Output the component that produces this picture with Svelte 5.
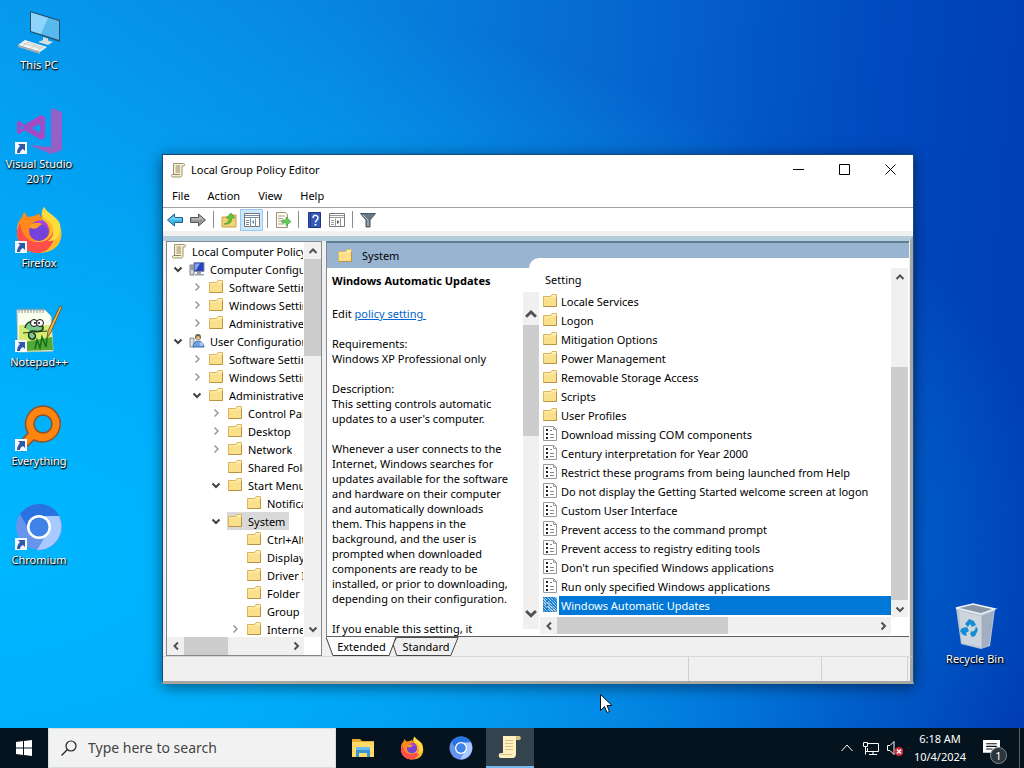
<script>
  const shortcuts = [
    { icon: 'pc', label: 'This PC', link: false },
    { icon: 'vs', label: 'Visual Studio 2017', link: true },
    { icon: 'firefox', label: 'Firefox', link: true },
    { icon: 'npp', label: 'Notepad++', link: true },
    { icon: 'everything', label: 'Everything', link: true },
    { icon: 'chromium', label: 'Chromium', link: true },
  ]

  const tree = [
    { level: 0, icon: 'scroll', label: 'Local Computer Policy' },
    { level: 1, icon: 'computer', label: 'Computer Configuration', open: true },
    { level: 2, icon: 'folder', label: 'Software Settings', open: false },
    { level: 2, icon: 'folder', label: 'Windows Settings', open: false },
    { level: 2, icon: 'folder', label: 'Administrative Templates', open: false },
    { level: 1, icon: 'user', label: 'User Configuration', open: true },
    { level: 2, icon: 'folder', label: 'Software Settings', open: false },
    { level: 2, icon: 'folder', label: 'Windows Settings', open: false },
    { level: 2, icon: 'folder', label: 'Administrative Templates', open: true },
    { level: 3, icon: 'folder', label: 'Control Panel', open: false },
    { level: 3, icon: 'folder', label: 'Desktop', open: false },
    { level: 3, icon: 'folder', label: 'Network', open: false },
    { level: 3, icon: 'folder', label: 'Shared Folders' },
    { level: 3, icon: 'folder', label: 'Start Menu and Taskbar', open: true },
    { level: 4, icon: 'folder', label: 'Notifications' },
    { level: 3, icon: 'folder', label: 'System', open: true, selected: true },
    { level: 4, icon: 'folder', label: 'Ctrl+Alt+Del Options' },
    { level: 4, icon: 'folder', label: 'Display' },
    { level: 4, icon: 'folder', label: 'Driver Installation' },
    { level: 4, icon: 'folder', label: 'Folder Redirection' },
    { level: 4, icon: 'folder', label: 'Group Policy' },
    { level: 4, icon: 'folder', label: 'Internet Communication', open: false },
  ]

  const folders = ['Locale Services', 'Logon', 'Mitigation Options', 'Power Management',
    'Removable Storage Access', 'Scripts', 'User Profiles']
  const policies = [
    'Download missing COM components',
    'Century interpretation for Year 2000',
    'Restrict these programs from being launched from Help',
    'Do not display the Getting Started welcome screen at logon',
    'Custom User Interface',
    'Prevent access to the command prompt',
    'Prevent access to registry editing tools',
    "Don't run specified Windows applications",
    'Run only specified Windows applications',
    'Windows Automatic Updates',
  ]
  const settings = [
    ...folders.map((label) => ({ icon: 'folder', label })),
    ...policies.map((label) => ({ icon: 'policy', label })),
  ]

  const description = `Requirements:
Windows XP Professional only

Description:
This setting controls automatic
updates to a user's computer.

Whenever a user connects to the
Internet, Windows searches for
updates available for the software
and hardware on their computer
and automatically downloads
them. This happens in the
background, and the user is
prompted when downloaded
components are ready to be
installed, or prior to downloading,
depending on their configuration.

If you enable this setting, it`

  let selected = $state('Windows Automatic Updates')
  let search = $state('')

  const indent = (level) => (level === 0 ? 4 : 3 + 19 * (level - 1))
</script>

{#snippet chevron(dir)}
  <svg class="chevron" viewBox="0 0 10 10" aria-hidden="true">
    {#if dir === 'up'}<path d="M1.5 7 5 3.5 8.500 7" />
    {:else if dir === 'down'}<path d="M1.500 3.500 5 7l3.500-3.500" />
    {:else if dir === 'left'}<path d="M7 1.500 3.500 5 7 8.500" />
    {:else}<path d="M3.500 1.500 7 5 3.500 8.500" />{/if}
  </svg>
{/snippet}

{#snippet scrollbar(kind, start, size)}
  <div class="bar {kind}">
    <button aria-label="Scroll back">{@render chevron(kind === 'h' ? 'left' : 'up')}</button>
    <div class="track">
      <div class="before" style:flex-basis="{start}%"></div>
      <div class="thumb" style:flex-basis="{size}%"></div>
    </div>
    <button aria-label="Scroll forward">{@render chevron(kind === 'h' ? 'right' : 'down')}</button>
  </div>
{/snippet}

{#snippet small(icon)}
  <svg class="small" viewBox="0 0 16 16" aria-hidden="true">
    {#if icon === 'folder'}
      <path d="M1.500 3.500h7l1.500-2h4.500v12h-13z" fill="#fbe08b" stroke="#dcb65a" />
      <path d="M10.500 2h3.500v1.500h-4.500z" fill="#fff3c0" />
      <path d="M2 5h6l1.500-1H14" fill="none" stroke="#fdedb4" />
      <path d="M1.500 13.500h13V4" stroke="#b99445" fill="none" />
    {:else if icon === 'policy'}
      <path d="M1.500.5h10l3 3v11h-13z" fill="#fff" stroke="#9a9a9a" />
      <path d="M11.500.5v3h3" fill="none" stroke="#9a9a9a" />
      <path d="M4 3h2v2H4zM4 7h2v2H4zM4 11h2v2H4z" fill="#222" />
      <path d="M8 4.500h2M8 8.500h4M8 11.500h4" stroke="#888" />
    {:else if icon === 'scroll'}
      <path d="M3.500 1.500h10c1.500 0 1.500 2.500 0 2.500H12v9c0 1.500-1 2-2 2H2.500c-1.500 0-1.500-2.500 0-2.500h1z" fill="#f8f2d2" stroke="#9a9475" />
      <path d="M5.500 4h4.500M5.500 6h4.500M5.500 8h4.500M5.500 10h4.500M3 12.500h7" stroke="#8f8866" fill="none" />
    {:else if icon === 'computer'}
      <path d="M1 4h4v10H1z" fill="#d6d9df" stroke="#777c88" />
      <path d="M2 6h2M2 8h2" stroke="#555" />
      <path d="M5 1.500h10v9H5z" fill="#2d40bd" stroke="#858ca0" />
      <path d="M6 2.500h5L7 9H6z" fill="#7da8ee" />
      <path d="M8 11h4v2h3v1.500H6V13h2z" fill="#9aa0ae" />
    {:else}
      <path d="M1 5h4v9H1z" fill="#dde1e7" stroke="#8a8f99" />
      <circle cx="9" cy="4" r="3" fill="#6f6144" />
      <circle cx="9" cy="5" r="2" fill="#dbb98e" />
      <path d="M4 14c0-8 10-8 11 0z" fill="#6f9fdc" stroke="#416cab" />
      <circle cx="12.500" cy="11" r="2" fill="#a4c6f0" />
    {/if}
  </svg>
{/snippet}

{#snippet firefox()}
  <path d="M24 46C11 46 2 37 2 25 2 18 4 14 7 11l2-5 4 5 6-1c3-1 4-2 5-3 1 4 3 5 5 6l-5 3c8-1 14 5 14 12z" fill="#ff8a1c" />
  <path d="M29 1c1 5 8 8 12 13 7 8 7 18 2 25-5 6-12 8-19 8C11 47 2 38 2 26c0-5 1-8 3-11 0 18 10 21 18 20 14-1 15-14 7-19-5-4-4-10-1-15z" fill="#ffbd2e" />
  <path d="M2 25c1-4 2-7 3-9 2 16 10 20 18 20 9 0 14-5 15-11 4 12-5 20-13 22C12 48 1 38 2 25z" fill="#ff4f4b" />
  <path d="M34 15c7 7 5 17-1 20 8 1 14-6 12-17-2-7-12-10-16-17-4 7-2 10 5 14z" fill="#ffdc3d" />
  <circle cx="24" cy="25" r="10" fill="#7543d9" />
  <path d="M14 21c3-5 9-5 15-3-4 0-5 3-7 4s-5 1-8-1z" fill="#ff9d29" />
  <path d="M20 16c8-4 14 1 13 8-3-6-7-7-13-8z" fill="#b13be5" />
{/snippet}

{#snippet chromium()}
  <circle cx="24" cy="24" r="23" fill="#6795ee" />
  <path d="M5 11C15-3 37-2 44 13H24c-8 0-12 6-11 12z" fill="#2873df" />
  <path d="M44 13c8 18-6 35-22 34l11-18c3-6 1-12-4-16z" fill="#a9caff" />
  <circle cx="24" cy="24" r="12" fill="#fff" />
  <circle cx="24" cy="24" r="9.500" fill="#3f83e8" />
{/snippet}

{#snippet large(icon)}
  <svg class="large" viewBox="0 0 48 48" aria-hidden="true">
    {#if icon === 'pc'}
      <path d="m15 3 30 9v22l-30-10z" fill="#25536f" />
      <path d="m16 4.500 28 8.500v19l-28-9z" fill="#57b9ee" />
      <path d="m16 4.500 17 5.500-7 16-10-3z" fill="#8fd4fa" />
      <path d="m28 29 5 1.500v2l5 1.500-5 3-10-3 5-2z" fill="#d6dde0" />
      <path d="m10 32 22 7-7 5-22-7z" fill="#f4f3ed" />
      <path d="m3 37 22 7v2L3 39z" fill="#a4acaf" />
      <path d="m8 35 19 6M12 34l17 6M8 38l5-4m2 7 5-4m2 6 5-4" stroke="#c9cecd" fill="none" />
    {:else if icon === 'vs'}
      <path d="m36 1 11 4v38l-11 4-22-9 22 2z" fill="#9661c7" />
      <path d="m26 8 4 2v21l-4 2L9 23l-4 4-3-1V15l3-1 4 4zm-1 9-8 4 8 5zM6 18v5l3-3z" fill="#a34bc5" />
    {:else if icon === 'firefox'}
      {@render firefox()}
    {:else if icon === 'npp'}
      <path d="M2 5h28l6 6 2 35-35 1z" fill="#fbfff0" stroke="#bbc7bb" />
      <path d="M4 20h31l2 25-33 1z" fill="#d7ed72" />
      <path d="m4 38 33-6 1 13-34 1z" fill="#50aa34" />
      <path d="M4 3v5m3-5v5m3-5v5m3-5v5m3-5v5m3-5v5m3-5v5m3-5v5m3-5v5" stroke="#899199" />
      <path d="m20 44 2-9 3 8 2-11 4 10 1-9" stroke="#176e20" fill="none" stroke-width="1.500" />
      <path d="M10 23c1-6 7-8 11-5l7 4c1 4-4 5-9 4-6-1-7 6-3 8 5 1 6-5 2-6" fill="#7cc98a" stroke="#1c3b20" stroke-width="1.500" />
      <path d="m8 28 24-2" stroke="#1c3b20" />
      <circle cx="19" cy="18" r="3.500" fill="#fff" stroke="#111" />
      <circle cx="25" cy="18" r="3.500" fill="#fff" stroke="#111" />
      <path d="M20 17v2m4-2v2" stroke="#111" stroke-width="1.500" />
      <path d="m32 33 1-7L45 1l2 1-11 25z" fill="#e7b843" stroke="#715b33" />
    {:else if icon === 'everything'}
      <path d="M28 2a18 18 0 1 1-9 34L7 47l-5-5 11-13A18 18 0 0 1 28 2zm0 9a9 9 0 1 0 0 18 9 9 0 0 0 0-18z" fill="#ff8410" stroke="#88532e" stroke-width="1.500" />
    {:else if icon === 'chromium'}
      {@render chromium()}
    {:else}
      <path d="m5 6 17-4 22 5-5 37-9 3-20-5z" fill="#b9c5d4" />
      <path d="m5 6 25 6 14-5-22-5z" fill="#8696a8" stroke="#eef3f7" stroke-width="1.500" />
      <path d="m8 9 22 5v31l-19-4z" fill="#cdd5df" />
      <path d="m31 14 12-5-5 34-7 3z" fill="#a1afc1" />
      <path d="m14 22 4-5 5 2 2 4-4 2-2-3-2 3zm-3 4 5-1 2 4-3 2 1 3-4-1-3-4zm10 9-2-3 2-4v2l3-2 1-4 2 4-3 6z" fill="#188ed2" />
    {/if}
  </svg>
{/snippet}

<main class="desktop">
  <nav class="shortcuts" aria-label="Desktop">
    {#each shortcuts as s}
      <button class="shortcut">
        <span class="art">
          {@render large(s.icon)}
          {#if s.link}
            <svg class="badge" viewBox="0 0 12 12" aria-hidden="true">
              <path d="M0 0h12v12H0z" fill="#f6f8fc" />
              <path d="M3 2h7v7L8 7c-2 1-3 2-3 4H2c0-3 1-5 3-7z" fill="#2f58a6" />
            </svg>
          {/if}
        </span>
        <span>{s.label}</span>
      </button>
    {/each}
  </nav>

  <button class="shortcut bin">
    <span class="art">{@render large('bin')}</span>
    <span>Recycle Bin</span>
  </button>

  <section class="window" aria-label="Local Group Policy Editor">
    <header class="titlebar">
      {@render small('scroll')}
      <h1>Local Group Policy Editor</h1>
      <button aria-label="Minimize"><svg viewBox="0 0 11 11"><path d="M0 5.500h11" /></svg></button>
      <button aria-label="Maximize"><svg viewBox="0 0 11 11"><path d="M.5.5h10v10H.5z" /></svg></button>
      <button aria-label="Close"><svg viewBox="0 0 11 11"><path d="m.5.5 10 10m0-10-10 10" /></svg></button>
    </header>

    <nav class="menu" aria-label="Menu">
      <button>File</button>
      <button>Action</button>
      <button>View</button>
      <button>Help</button>
    </nav>

    <div class="toolbar">
      <button aria-label="Back">
        <svg viewBox="0 0 16 16"><path d="m.5 8 7-6v3.500h8v5h-8V14z" fill="#43b4ea" stroke="#19658e" /><path d="m3 8 4-3v2h7" fill="none" stroke="#a4e2fb" /></svg>
      </button>
      <button aria-label="Forward">
        <svg viewBox="0 0 16 16"><path d="m15.500 8-7-6v3.500h-8v5h8V14z" fill="#999" stroke="#555" /><path d="M2 7h8V5l3 3" fill="none" stroke="#ccc" /></svg>
      </button>
      <i></i>
      <button aria-label="Up one level">
        <svg viewBox="0 0 16 16"><path d="M1 5h6l2-2h6v12H1z" fill="#f3d373" stroke="#c2a047" /><path d="M3 12c4-1 5-4 5-6H5l5-5 4 5h-3c0 4-2 7-8 6z" fill="#65c33c" stroke="#3f8926" stroke-width=".5" /></svg>
      </button>
      <button class="pressed" aria-label="Show/Hide Console Tree">
        <svg viewBox="0 0 16 16"><path d="M.5 1.500h15v13H.5z" fill="#fff" stroke="#777" /><path d="M1 3.500h14M1 5.500h14" stroke="#7b8da5" /><path d="M2 8.500h3m-3 2h3m-3 2h3m1.500-6v8m5-8v8" stroke="#7a8f9f" /><path d="m10 8-2 2 2 2z" fill="#5a7f9f" /></svg>
      </button>
      <i></i>
      <button aria-label="Export List">
        <svg viewBox="0 0 16 16"><path d="M1.500.5h9l2 2v13h-11z" fill="#fffdf1" stroke="#999276" /><path d="M3 4h7M3 6.500h5M3 9h4m-4 3h6" stroke="#aaa590" /><path d="M7 8h4V5l5 4.500-5 4.500v-3H7z" fill="#63c957" stroke="#37933a" stroke-width=".5" /></svg>
      </button>
      <i></i>
      <button aria-label="Help">
        <svg viewBox="0 0 16 16"><path d="M2.500.5h12v15h-12z" fill="#3359b9" stroke="#1f3478" /><path d="M4.500 1v14" stroke="#203b8d" /><path d="M7 6c0-4 5-3 5 0 0 2-2.500 2-2.500 4.500" stroke="#fff" stroke-width="1.500" fill="none" /><path d="M8.500 12h2v1.500h-2z" fill="#fff" /></svg>
      </button>
      <button aria-label="Show/Hide Action Pane">
        <svg viewBox="0 0 16 16"><path d="M.5 1.500h15v13H.5z" fill="#fff" stroke="#777" /><path d="M1 3.500h14M1 5.500h14" stroke="#999" /><path d="M2 8.500h3m-3 2h3m-3 2h3m1.500-6v8m5-8v8" stroke="#999" /><path d="m8 8 2.500 2L8 12z" fill="#555" /></svg>
      </button>
      <i></i>
      <button aria-label="Filter">
        <svg viewBox="0 0 16 16"><path d="M.5 1.500h15L10 8v7H6V8z" fill="#687784" stroke="#4d5963" /><path d="m3 3 5 5v6" stroke="#c2ccd3" fill="none" /></svg>
      </button>
    </div>

    <div class="panes">
      <aside class="tree">
        <ul>
          {#each tree as node}
            <li style:padding-left="{indent(node.level)}px">
              {#if node.level > 0}
                <span class="twist" class:open={node.open}>
                  {#if node.open !== undefined}{@render chevron(node.open ? 'down' : 'right')}{/if}
                </span>
              {/if}
              <span class="node" class:current={node.selected}>
                {@render small(node.icon)}<span class="label">{node.label}</span>
              </span>
            </li>
          {/each}
        </ul>
        {@render scrollbar('v', 0, 27)}
        {@render scrollbar('h', 0, 43)}
      </aside>

      <div class="result">
        <div class="views">
          <div class="details">
            <div class="band">{@render small('folder')}<span>System</span></div>
            <div class="extended">
              <h2>{selected}</h2>
              <div class="text">
                <p>Edit <a href="#policy">policy setting&nbsp;</a></p>
                <p class="body">{description}</p>
              </div>
              {@render scrollbar('v wide', 0, 41)}
            </div>
          </div>
          <div class="list">
            <div class="items">
              <div class="column">Setting</div>
              {#each settings as s}
                <button class="item" class:active={selected === s.label} onclick={() => (selected = s.label)}>
                  <span class="pic">{@render small(s.icon)}</span><span class="name">{s.label}</span>
                </button>
              {/each}
            </div>
            {@render scrollbar('v', 26, 74)}
            {@render scrollbar('h', 0, 54)}
          </div>
        </div>
        <div class="tabs">
          <button class="tab front">
            <svg viewBox="0 0 72 19" preserveAspectRatio="none" aria-hidden="true"><path d="M0 0 7 18.500h57L71 0" /></svg>
            <span>Extended</span>
          </button>
          <button class="tab">
            <svg viewBox="0 0 72 19" preserveAspectRatio="none" aria-hidden="true"><path d="M4 .5 0 7l4 11.500h59L71 .5z" /></svg>
            <span>Standard</span>
          </button>
        </div>
      </div>
    </div>
    <footer class="status"><span></span><span></span><span></span></footer>
  </section>

  <svg class="cursor" viewBox="0 0 12 19" aria-hidden="true">
    <path d="M.5.5v16l4-4 2.500 6 2.500-1L7 11.500h5z" fill="#fff" stroke="#111" />
  </svg>

  <footer class="taskbar">
    <button class="start" aria-label="Start">
      <svg viewBox="0 0 16 16"><path d="m0 2 7-1v6.500H0zm8-1 8-1v7.500H8zM0 8.500h7V15l-7-1zm8 0h8V16l-8-1z" fill="#fff" /></svg>
    </button>
    <label class="search">
      <svg viewBox="0 0 16 16" aria-hidden="true"><circle cx="10" cy="6" r="5" /><path d="m6.500 9.500-6 6" /></svg>
      <input type="text" placeholder="Type here to search" aria-label="Search" bind:value={search} />
    </label>
    <div class="apps">
      <button aria-label="File Explorer">
        <svg viewBox="0 0 24 24"><path d="M1 3h8l2 2h12v16H1z" fill="#e9aa2d" /><path d="M1 6h22v15H1z" fill="#ffdc69" /><path d="M5 13h14v8h-3v-4H8v4H5z" fill="#3c93d4" /><path d="M5 11h14v3H5z" fill="#69bdef" /></svg>
      </button>
      <button aria-label="Firefox"><svg viewBox="0 0 48 48">{@render firefox()}</svg></button>
      <button aria-label="Chromium"><svg viewBox="0 0 48 48">{@render chromium()}</svg></button>
      <button class="running" aria-label="Local Group Policy Editor">
        <svg viewBox="0 0 24 24"><path d="M5 1h16c2 0 2 4 0 4h-3v14c0 2-1 4-3 4H3c-3 0-3-5 0-5h2z" fill="#fff0bd" /><path d="M7 5.500h8M7 8.500h8M7 11.500h8M7 14.500h8M3 19.500h11" stroke="#d3bf8c" /><path d="M18 1v4h3c2 0 2-4 0-4z" fill="#d4bc83" /></svg>
      </button>
    </div>
    <div class="tray">
      <button class="glyph" aria-label="Show hidden icons"><svg viewBox="0 0 16 16"><path d="m2.500 11 5.500-6 5.500 6" /></svg></button>
      <button class="glyph" aria-label="Network"><svg viewBox="0 0 16 16"><path d="M5 3.500h10.500v8H4.500V8m5.500 3.500v3m-4 0h8M.5 2.500h4v4h-4zm2 4v8m0-3h2" /></svg></button>
      <button class="glyph" aria-label="Volume muted">
        <svg viewBox="0 0 16 16"><path d="M.5 5.500H3l4-4v13l-4-4H.5z" /><circle cx="12" cy="11.500" r="4.500" fill="#d62839" stroke="none" /><path d="m10 9.500 4 4m0-4-4 4" stroke-width="1.500" /></svg>
      </button>
      <div class="clock"><span>6:18 AM</span><span>10/4/2024</span></div>
      <button class="notify" aria-label="Notifications">
        <svg viewBox="0 0 16 16"><path d="M0 0h16v12h-5v4l-4-4H0z" fill="#fff" /><path d="M3 3.500h10M3 6h10M3 8.500h6" stroke="#07131f" /></svg>
        <span>1</span>
      </button>
      <div class="peek"></div>
    </div>
  </footer>
</main>

<style>
  :global(body) { margin: 0; }
  * { box-sizing: border-box; }
  button { font: inherit; color: inherit; background: none; border: 0; padding: 0; margin: 0; }
  svg { display: block; flex: none; }
  h1, h2, p, ul { margin: 0; padding: 0; }

  .desktop {
    position: relative; height: 100vh; overflow: hidden; display: flex; flex-direction: column;
    justify-content: flex-end; color: #000;
    font: 11px/15px "Noto Sans", "Open Sans", sans-serif;
    background:
      radial-gradient(ellipse at 0% 72%, #00b7ff 0%, rgba(0, 178, 255, 0.9) 24%, rgba(0, 150, 240, 0) 74%),
      linear-gradient(95deg, #0698ec 0%, #0784df 32%, #0666d0 58%, #0049be 82%, #003cb3 100%);
  }

  .shortcuts { position: absolute; left: 0; top: 8px; display: grid; grid-auto-rows: 99px; }
  .shortcut { width: 78px; display: flex; flex-direction: column; align-items: center; color: #fff;
              justify-content: flex-start; text-shadow: 0 1px 2px #000, 1px 1px 1px #000; }
  .art { position: relative; margin-bottom: 1px; }
  .large { width: 48px; height: 48px; }
  .badge { position: absolute; left: 0; bottom: 1px; width: 12px; height: 12px; }
  .bin { position: absolute; right: 10px; top: 602px; }

  .window {
    position: absolute; left: 162px; top: 154px; width: 752px; height: 530px;
    display: flex; flex-direction: column; background: #f0f0f0;
    border: 1px solid #174a78; border-bottom: 3px solid #a5a7a0;
    box-shadow: 0 3px 14px rgba(0, 0, 0, 0.5);
  }
  .titlebar { height: 29px; display: flex; align-items: center; background: #fff; padding-left: 7px; }
  .titlebar h1 { flex: 1; font-size: 11px; font-weight: 400; padding-left: 5px; }
  .titlebar button { width: 46px; height: 29px; display: grid; place-items: center; }
  .titlebar button svg { width: 11px; height: 11px; fill: none; stroke: #000; }
  .menu { height: 23px; display: flex; align-items: center; background: #fff; }
  .menu button { padding: 0 9px; }
  .toolbar { height: 24px; display: flex; align-items: center; background: #fff; border-top: 1px solid #a0a0a0; }
  .toolbar button { width: 23px; height: 22px; display: grid; place-items: center; }
  .toolbar button svg { width: 16px; height: 16px; }
  .toolbar .pressed { background: #cce8ff; border: 1px solid #99c9ee; }
  .toolbar i { width: 1px; height: 17px; background: #8d8d8d; margin: 0 3px 0 4px; }

  .small { width: 16px; height: 16px; }
  .chevron { width: 10px; height: 10px; fill: none; stroke: #505050; stroke-width: 2; }

  .panes { flex: 1; min-height: 0; display: flex; gap: 4px; padding-left: 3px; margin-top: 5px;
           border-top: 5px solid #b4cddd; border-right: 3px solid #a5a7a5; }
  .tree { width: 156px; background: #fff; border: 1px solid #828790; display: grid; overflow: hidden;
          grid-template-columns: minmax(0, 1fr) 17px; grid-template-rows: minmax(0, 1fr) 18px; }
  .tree ul { list-style: none; overflow: hidden; padding-right: 1px; }
  .tree li { height: 18px; display: flex; align-items: center; white-space: nowrap; }
  .tree > :global(.bar.h) { grid-row: 2; grid-column: 1 / 2; }
  .twist { width: 16px; margin-right: 3px; display: grid; place-items: center; flex: none; }
  .twist .chevron { stroke: #9a9a9a; stroke-width: 1.5; }
  .twist.open .chevron { stroke: #404040; stroke-width: 2; }
  .node { min-width: 0; display: flex; align-items: center; gap: 5px; height: 18px; }
  .node.current { background: #d9d9d9; padding-right: 4px; }
  .label { overflow: hidden; }

  .bar { display: flex; background: #f0f0f0; min-width: 0; min-height: 0; }
  .bar button { flex: none; width: 17px; height: 17px; display: grid; place-items: center; }
  .bar.v { flex-direction: column; }
  .track { flex: 1; display: flex; }
  .bar.v .track { flex-direction: column; }
  .before, .thumb { flex: none; }
  .thumb { background: #cdcdcd; }
  .bar.wide button { width: 16px; height: 33px; }
  .bar.wide button:first-child { padding-top: 10px; }
  .bar.wide .chevron { width: 14px; height: 14px; }

  .result { flex: 1; min-width: 0; display: flex; flex-direction: column; margin-right: 1px; }
  .views { flex: 1; min-height: 0; display: grid; grid-template-columns: 212px minmax(0, 1fr);
           background: #99b4d1; border-top: 2px solid #5c7f94; border-left: 1px solid #828790;
           border-bottom: 1px solid #606060; }
  .details { display: flex; flex-direction: column; min-height: 0; }
  .band { position: relative; flex: none; height: 25px; display: flex; align-items: center; gap: 9px; padding-left: 10px; }
  .band::after { content: ""; position: absolute; right: 0; bottom: 0; width: 10px; height: 10px;
                 background: #fff; border-top-left-radius: 10px; }
  .extended { flex: 1; min-height: 0; background: #fff; display: grid;
              grid-template-columns: minmax(0, 1fr) 16px; grid-template-rows: 24px minmax(0, 1fr); }
  .extended h2 { grid-column: 1 / 3; font-size: 11px; line-height: 26px; padding-left: 5px; }
  .extended > :global(.bar) { margin-bottom: 7px; }
  .text { overflow: hidden; padding: 14px 0 0 5px; }
  .text a { color: #0066cc; }
  .body { white-space: pre; margin-top: 15px; }

  .list { margin-top: 15px; background: #fff; padding: 10px 1px 2px 1px; display: grid; min-height: 0;
          grid-template-columns: minmax(0, 1fr) 17px; grid-template-rows: minmax(0, 1fr) 17px; }
  .list > :global(.bar.h) { grid-row: 2; grid-column: 1 / 2; }
  .items { overflow: hidden; display: flex; flex-direction: column; }
  .column { flex: none; height: 24px; line-height: 24px; padding-left: 5px; }
  .item { flex: none; height: 19px; display: flex; text-align: left; white-space: nowrap; }
  .pic { position: relative; width: 19px; padding: 1px 0 0 2px; }
  .name { flex: 1; height: 19px; line-height: 19px; padding-left: 2px; }
  .item.active .name { background: #0078d7; color: #fff; }
  /* hatched highlight over the selected icon */
  .item.active .pic::after { content: ""; position: absolute; left: 3px; top: 1px; width: 14px; height: 15px;
                             background: repeating-linear-gradient(45deg, rgba(0, 120, 215, 0.9) 0 1px, rgba(120, 180, 225, 0.6) 1px 2px); }

  .tabs { flex: none; height: 19px; display: flex; }
  .tab { position: relative; width: 71px; height: 19px; margin-right: -4px; }
  .tab svg { position: absolute; inset: 0; width: 100%; height: 100%; fill: #f0f0f0; stroke: #404040; }
  .tab.front { z-index: 1; }
  .tab.front svg { fill: #fff; }
  .tab span { position: relative; }
  .tab + .tab { width: 66px; }

  .status { height: 25px; display: flex; gap: 3px; padding: 0 2px 0 3px; border-top: 1px solid #d7d7d7;
            border-right: 3px solid #a5a7a5; }
  .status span { border-right: 1px solid #d0d0d0; width: 83px; }
  .status span:first-child { flex: 1; }
  .status span:nth-child(2) { width: 130px; }

  .cursor { position: absolute; left: 600px; top: 694px; width: 12px; height: 19px; }

  .taskbar { height: 40px; display: flex; background: #04131d; color: #fff; position: relative; }
  .start { width: 48px; display: grid; place-items: center; }
  .start svg { width: 16px; height: 16px; }
  .search { width: 288px; display: flex; align-items: center; gap: 11px; padding-left: 12px;
            background: #f2f2f2; border: 1px solid #d4dde2; }
  .search svg { width: 16px; height: 16px; fill: none; stroke: #222; stroke-width: 1.2; }
  .search input { flex: 1; min-width: 0; border: 0; padding: 0; background: none; outline: 0;
                  font: 14px/20px "Noto Sans", "Open Sans", sans-serif; color: #333; }
  .search input::placeholder { color: #444; opacity: 1; }
  .apps { display: flex; gap: 1px; padding-left: 3px; }
  .apps button { width: 48px; display: grid; place-items: center; }
  .apps svg { width: 24px; height: 24px; }
  .apps .running { background: #34444f; border-bottom: 2px solid #76b9ed; }
  .tray { margin-left: auto; display: flex; align-items: center; }
  .glyph { width: 24px; height: 40px; display: grid; place-items: center; }
  .glyph svg { width: 16px; height: 16px; fill: none; stroke: #fff; }
  .clock { width: 66px; display: flex; flex-direction: column; align-items: center; line-height: 18px; }
  .notify { position: relative; width: 46px; height: 40px; padding-left: 10px; }
  .notify svg { width: 17px; height: 17px; }
  .notify span { position: absolute; left: 17px; top: 19px; width: 17px; height: 17px; border-radius: 50%;
                 background: #2c343c; border: 1px solid #858b90; font-size: 11px; line-height: 15px; text-align: center; }
  .peek { width: 5px; height: 40px; border-left: 1px solid #5b6468; }
</style>
